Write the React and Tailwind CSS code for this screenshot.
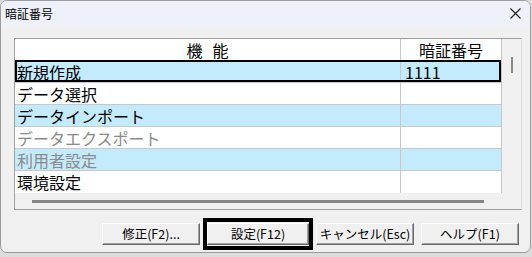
const rows = [
  { name: '新規作成', code: '1111', blue: true, selected: true },
  { name: 'データ選択', code: '', blue: false },
  { name: 'データインポート', code: '', blue: true },
  { name: 'データエクスポート', code: '', blue: false, disabled: true },
  { name: '利用者設定', code: '', blue: true, disabled: true },
  { name: '環境設定', code: '', blue: false },
];

const jp = { fontFamily: '"Noto Sans CJK JP", "DejaVu Sans", sans-serif' };

function WinButton({ label, width }) {
  return (
    <div
      className={`h-[22px] ${width} flex items-center justify-center bg-[#f0f0f0] border border-t-white border-l-white border-r-[#696969] border-b-[#696969] shadow-[inset_-1px_-1px_0_#a0a0a0] text-[12.5px] leading-none text-black`}
    >
      {label}
    </div>
  );
}

export default function App() {
  return (
    <div className="w-[532px] h-[257px] bg-[#dcdcdc] overflow-hidden" style={jp}>
      <div className="w-[531px] h-[253px] rounded-[7px] border border-[#9c9c9c] bg-[#f0f0f0] flex flex-col overflow-hidden">
        {/* Title bar */}
        <div className="h-[25px] bg-[#eef1f9] flex items-center justify-between pl-[4px] pr-[9px] shrink-0">
          <span className="text-[12px] leading-none text-black">暗証番号</span>
          <svg width="11" height="11" viewBox="0 0 11 11">
            <path d="M0.5 0.5 L10.5 10.5 M10.5 0.5 L0.5 10.5" stroke="#222" strokeWidth="1.1" fill="none" />
          </svg>
        </div>

        {/* List panel */}
        <div className="mt-[12px] ml-[13px] w-[508px] border border-[#a0a0a0] border-r-[#dadada] flex flex-col bg-[#f0f0f0]">
          <div className="flex">
            <div className="w-[487px] bg-white border-r border-[#c8c8c8]">
              <div className="h-[22px] flex border-b border-[#c8c8c8]">
                <div className="w-[386px] border-r border-[#c8c8c8] flex items-center justify-center gap-[10px] text-[16px] leading-none">
                  <span>機</span>
                  <span>能</span>
                </div>
                <div className="flex-1 flex items-center justify-center text-[16px] leading-none">暗証番号</div>
              </div>
              {rows.map((r, i) => (
                <div
                  key={i}
                  className={`relative h-[22px] flex border-b border-[#c8c8c8] ${r.blue ? 'bg-[#c4ebfd]' : 'bg-white'} ${i === rows.length - 1 ? 'border-b-0 h-[21px]' : ''}`}
                >
                  <div
                    className={`w-[386px] border-r border-[#c8c8c8] flex items-center pl-[2px] text-[16px] leading-none ${r.disabled ? 'text-[#8a8a8a]' : 'text-black'}`}
                  >
                    {r.name}
                  </div>
                  <div className="flex-1 flex items-center pl-[4px] text-[16px] leading-none text-black">{r.code}</div>
                  {r.selected && <div className="absolute inset-0 -top-px border-[2.5px] border-black pointer-events-none" />}
                </div>
              ))}
            </div>
            {/* vertical scrollbar */}
            <div className="w-[19px] flex justify-center pt-[18px]">
              <div className="w-[2px] h-[16px] bg-[#8a8a8a] ml-[1px]" />
            </div>
          </div>
          {/* horizontal scrollbar */}
          <div className="h-[16px] flex items-center pl-[17px]">
            <div className="w-[452px] h-[3px] bg-[#858585]" />
          </div>
        </div>

        {/* Buttons */}
        <div className="mt-[8px] flex items-center pl-[101px]">
          <WinButton label="修正(F2)..." width="w-[98px]" />
          <div className="ml-[3px] w-[110px] h-[32px] border-[4px] border-black flex items-center justify-center">
            <WinButton label="設定(F12)" width="w-[102px]" />
          </div>
          <div className="ml-[3px]">
            <WinButton label="キャンセル(Esc)" width="w-[98px]" />
          </div>
          <div className="ml-[7px]">
            <WinButton label="ヘルプ(F1)" width="w-[98px]" />
          </div>
        </div>
      </div>
    </div>
  );
}
